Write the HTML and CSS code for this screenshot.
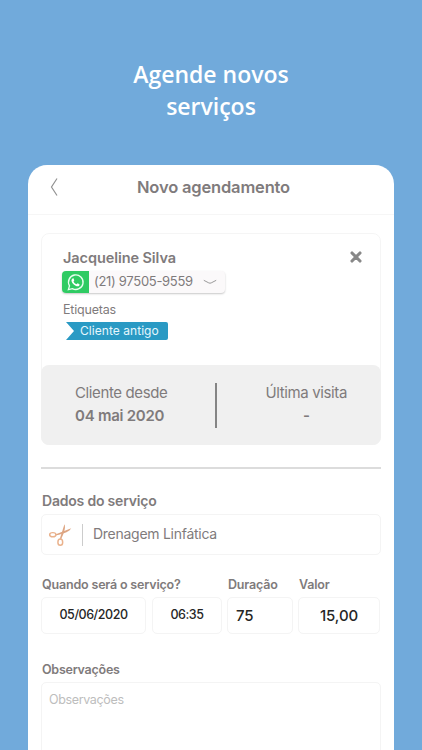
FILE: index.html
```html
<!DOCTYPE html>
<html lang="pt-BR">
<head>
<meta charset="UTF-8">
<meta name="viewport" content="width=device-width, initial-scale=1.0">
<title>Novo agendamento</title>
<link rel="stylesheet" href="styles.css">
</head>
<body>
    <h1 class="headline">Agende novos<br>serviços</h1>

    <div class="screen">
        <div class="topbar">
            <svg class="back" viewBox="0 0 8 20"><path d="M7 1.5 L1.5 10 L7 18.5"/></svg>
            <h2><span>Novo agendamento</span></h2>
        </div>

        <div class="content">
            <!-- Cliente -->
            <div class="client">
                <div class="client-info">
                    <div class="client-name">
                        <span>Jacqueline Silva</span>
                        <svg class="close" viewBox="0 0 14 14"><path d="M3 3 L11 11 M11 3 L3 11"/></svg>
                    </div>
                    <div class="phone">
                        <div class="whatsapp">
                            <svg viewBox="0 0 24 24">
                                <path class="bubble" d="M3 21 L4.4 16.2 A9.2 9.2 0 1 1 8 19.7 Z"/>
                                <path class="handset" d="M8.5 6.8 C9.1 6.6 9.5 6.8 9.7 7.3 L10.4 9 C10.6 9.6 9.6 10.3 9.5 10.7 C10.3 12.4 11.5 13.5 13.2 14.2 C13.7 14.1 14.3 13 14.8 13.1 L16.9 14.1 C17.4 14.4 17.1 15.8 16.4 16.3 C15 17.4 12.7 16.7 10.6 15.2 C8.6 13.7 7 11.6 6.9 9.8 C6.9 8.4 7.7 7.1 8.5 6.8 Z"/>
                            </svg>
                        </div>
                        <span class="number">(21) 97505-9559</span>
                        <svg class="arrow" viewBox="0 0 14 6"><path d="M0.8 1.3 L5.8 3.9 Q7 4.5 8.2 3.9 L13.2 1.3"/></svg>
                    </div>
                    <div class="tags-title">Etiquetas</div>
                    <div class="tag"><span>Cliente antigo</span></div>
                </div>
                <div class="client-dates">
                    <div class="since">
                        <div>Cliente desde</div>
                        <strong>04 mai 2020</strong>
                    </div>
                    <div class="divider"></div>
                    <div class="last">
                        <div>Última visita</div>
                        <strong>-</strong>
                    </div>
                </div>
            </div>

            <hr>

            <!-- Serviço -->
            <h3>Dados do serviço</h3>
            <div class="box service">
                <svg class="scissors" viewBox="0 0 24 24">
                    <path class="blade" d="M7 12 L22.3 6 C20.5 9 17 10.8 7.2 13 Z"/>
                    <path class="blade" d="M11.2 16.5 L15.8 2.2 C17.2 5.5 15.5 10 12.4 17 Z"/>
                    <ellipse cx="4.6" cy="12.2" rx="3" ry="2"/>
                    <ellipse cx="11.8" cy="19.4" rx="2.3" ry="3"/>
                </svg>
                <span class="service-name"><span>Drenagem Linfática</span></span>
            </div>

            <div class="fields">
                <div class="when">
                    <label>Quando será o serviço?</label>
                    <div class="when-boxes">
                        <div class="box date">05/06/2020</div>
                        <div class="box time">06:35</div>
                    </div>
                </div>
                <div class="duration">
                    <label>Duração</label>
                    <div class="box">75</div>
                </div>
                <div class="price">
                    <label>Valor</label>
                    <div class="box">15,00</div>
                </div>
            </div>

            <label class="notes-label">Observações</label>
            <div class="box notes">Observações</div>
        </div>
    </div>
</body>
</html>
```

FILE: styles.css
```css
* {
    box-sizing: border-box;
}

body {
    margin: 0;
    height: 750px;
    overflow: hidden;
    display: flex;
    flex-direction: column;
    background: #71aadb;
    color: #7f7b7c;
    font-family: Inter, "Liberation Sans", sans-serif;
    white-space: nowrap;
}

.headline {
    margin: 0;
    padding-top: 58px;
    height: 165px;
    color: #fff;
    font: 600 23px/32px "Open Sans", sans-serif;
    text-align: center;
}

.screen {
    flex: 1;
    min-height: 0;
    overflow: hidden;
    width: 366px;
    margin-left: 28px;
    border-radius: 19px 19px 0 0;
    background: #fff;
}

.topbar {
    display: flex;
    align-items: center;
    height: 50px;
    padding: 0 4px 5px 22px;
    border-bottom: 1px solid #f6f6f6;
}

.back {
    width: 8px;
    height: 20px;
    fill: none;
    stroke: #929292;
    stroke-width: 1.2;
}

.topbar h2 {
    margin: 0 0 0 79px;
    font-size: 16.5px;
    font-weight: 600;
    letter-spacing: -0.17px;
}

.content {
    padding: 18px 13px 0;
}

.client {
    height: 212px;
    border-radius: 8px;
    border: 1px solid #f5f5f5;
}

.client-info {
    height: 131px;
    padding: 13px 17px 0 21px;
}

.client-name {
    display: flex;
    justify-content: space-between;
    align-items: center;
    height: 20px;
    font-size: 14.5px;
    font-weight: 600;
    letter-spacing: -0.08px;
}

.close {
    width: 14px;
    height: 14px;
    stroke: #888;
    stroke-width: 3.1;
    stroke-linecap: round;
}

.phone {
    display: flex;
    align-items: center;
    width: 163px;
    height: 22px;
    margin: 4px 0 0 -1px;
    border-radius: 4px;
    background: #fbf9fa;
    box-shadow: 0 1px 2px rgba(0, 0, 0, 0.22);
    font-size: 13px;
    letter-spacing: -0.3px;
}

.whatsapp {
    display: flex;
    align-items: center;
    justify-content: center;
    width: 27px;
    height: 22px;
    border-radius: 4px 0 0 4px;
    background: #2fcb63;
}

.whatsapp svg {
    width: 19px;
    height: 19px;
}

.bubble {
    fill: none;
    stroke: #e9fff0;
    stroke-width: 1.7;
}

.handset {
    fill: #fff;
}

.number {
    width: 98px;
    margin: -2px 0 0 5px;
}

.arrow {
    width: 14px;
    height: 6px;
    margin-left: 11px;
    fill: none;
    stroke: #999;
}

.tags-title {
    margin-top: 8px;
    font-size: 12.5px;
    letter-spacing: -0.2px;
    line-height: 18px;
}

.tag {
    width: 102px;
    height: 18px;
    margin: 3px 0 0 3px;
    padding-left: 14px;
    border-radius: 0 2px 2px 0;
    background: #2a9ac4;
    clip-path: polygon(0 0, 100% 0, 100% 100%, 0 100%, 8px 50%);
    color: #e6f7fd;
    font-size: 12px;
    letter-spacing: 0.05px;
    line-height: 18px;
}

.client-dates {
    display: flex;
    height: 80px;
    margin: 0 -1px;
    padding: 18px 34px 0 34px;
    border-radius: 8px;
    background: #f0f0f0;
    font-size: 15px;
    letter-spacing: -0.38px;
    line-height: 23px;
}

.client-dates strong {
    font-weight: 600;
    letter-spacing: -0.25px;
}

.since,
.last {
    margin-top: -2px;
}

.since {
    width: 140px;
}

.divider {
    width: 2px;
    height: 45px;
    background: #858585;
}

.last {
    margin-left: auto;
    text-align: center;
}

hr {
    height: 2px;
    margin: 22px 0;
    border: 0;
    background: #dcdcdc;
}

h3 {
    margin: 0 0 3px;
    padding-left: 1px;
    font-size: 14px;
    font-weight: 600;
    letter-spacing: -0.2px;
    line-height: 20px;
}

.box {
    border: 1px solid #f4f4f4;
    border-radius: 5px;
}

.service {
    display: flex;
    align-items: center;
    height: 41px;
    padding-left: 6px;
    font-size: 14px;
    letter-spacing: -0.27px;
}

.scissors {
    width: 25px;
    height: 25px;
}

.scissors ellipse {
    fill: none;
    stroke: #eab28c;
    stroke-width: 1.4;
}

.blade {
    fill: #dda582;
}

.service-name {
    height: 22px;
    margin-left: 9px;
    padding-left: 10px;
    border-left: 1px solid #ccc;
    line-height: 19px;
}

label {
    display: block;
    padding-left: 1px;
    font-size: 12.5px;
    font-weight: 600;
    letter-spacing: -0.18px;
    line-height: 18px;
}

.fields {
    display: flex;
    gap: 5px;
    margin-top: 21px;
}

.when {
    width: 181px;
}

.when-boxes {
    display: flex;
    gap: 6px;
}

.fields .box {
    height: 37px;
    margin-top: 3px;
    color: #262626;
    font-size: 15px;
    font-weight: 500;
    letter-spacing: -0.1px;
    line-height: 35px;
    text-align: center;
}

.fields .date,
.fields .time {
    font-size: 12.5px;
    letter-spacing: -0.45px;
    line-height: 33px;
}

.date {
    width: 105px;
}

.time {
    width: 70px;
}

.duration {
    width: 66px;
}

.duration .box {
    padding-left: 8px;
    text-align: left;
}

.price {
    width: 82px;
}

.notes-label {
    margin-top: 27px;
    letter-spacing: -0.25px;
}

.notes {
    height: 90px;
    margin-top: 3px;
    padding: 8px 7px;
    color: #bdbdbd;
    font-size: 12.5px;
    letter-spacing: -0.35px;
    line-height: 18px;
}
```
